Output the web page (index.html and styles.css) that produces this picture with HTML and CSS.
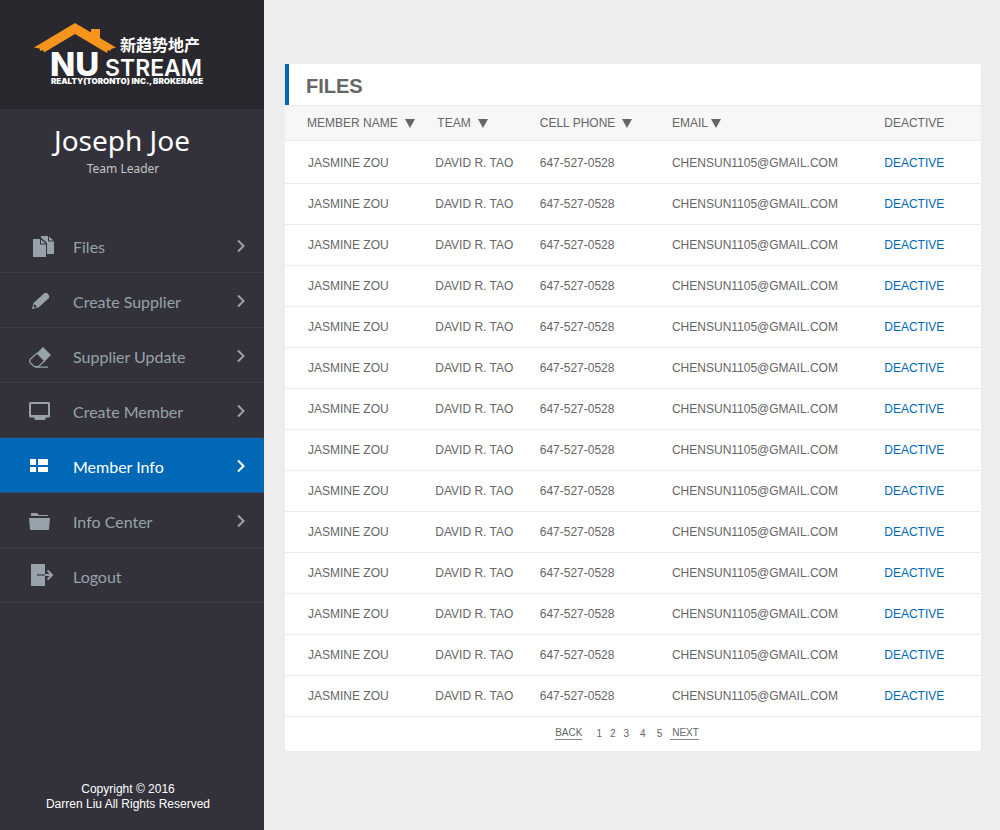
FILE: index.html
```html
<!DOCTYPE html>
<html lang="en">
<head>
<meta charset="utf-8">
<meta name="viewport" content="width=device-width, initial-scale=1">
<title>Member Info</title>
<link rel="stylesheet" href="styles.css">
</head>
<body>
<div class="layout">
  <aside class="sidebar">
    <header class="brand">
      <svg class="logo" width="170" height="66" viewBox="0 0 170 66" role="img" aria-label="NU Stream Realty">
        <path class="roof" d="M0 25.500 L41 1 L57 10.500 V7 H66 V16 L82 25.500 L77 27 L76.500 29 L74 28 L73 31 L41 12 L10 30.500 L9 28 L6.500 29 L5.500 26.500 Z"/>
        <text class="logo-cn" x="86" y="29">新趋势地产</text>
        <text class="logo-nu" x="16" y="54">NU</text>
        <text class="logo-stream" x="71" y="54">STREAM</text>
        <text class="logo-sub" x="17" y="62">REALTY(TORONTO) INC., BROKERAGE</text>
      </svg>
    </header>
    <section class="profile">
      <h2 class="profile-name">Joseph Joe</h2>
      <p class="profile-role">Team Leader</p>
    </section>
    <nav class="menu">
      <a class="menu-item" href="#">
        <svg class="icon" width="26" height="26" viewBox="0 0 26 26"><path d="M4 6h7v5.500h6V24H4z M12 6.500V10.500h4.500z M12 3h7v5.500h6V21h-7V10L12 4.500z M20 3.500V7.500h4.500z"/></svg>
        <span class="menu-label">Files</span>
        <svg class="chevron" width="10" height="14" viewBox="0 0 10 14"><path d="M2 1.500L7.500 7L2 12.500"/></svg>
      </a>
      <a class="menu-item" href="#">
        <svg class="icon" width="26" height="26" viewBox="0 0 26 26"><path d="M3 21l1.500-6L15 5.500Q17 4 19 6t1 4L9.500 19.500z M4.500 18.500l1.200 1.200L8 19 5.500 16z" fill-rule="evenodd"/></svg>
        <span class="menu-label">Create Supplier</span>
        <svg class="chevron" width="10" height="14" viewBox="0 0 10 14"><path d="M2 1.500L7.500 7L2 12.500"/></svg>
      </a>
      <a class="menu-item" href="#">
        <svg class="icon" width="26" height="26" viewBox="0 0 26 26"><path d="M14 4L22 12L15.500 18.500L7.500 10.500z"/><path class="line" d="M8 10L1.500 16Q-.2 18 1.500 20L5 23.500H9.500L16 17.500M6 24.200H19"/></svg>
        <span class="menu-label">Supplier Update</span>
        <svg class="chevron" width="10" height="14" viewBox="0 0 10 14"><path d="M2 1.500L7.500 7L2 12.500"/></svg>
      </a>
      <a class="menu-item" href="#">
        <svg class="icon" width="26" height="26" viewBox="0 0 26 26"><path fill-rule="evenodd" d="M1.500 4h18Q21 4 21 5.500v12.500Q21 19.500 19.500 19.500H17l-1 2.500H6l-1-2.500H1.500Q0 19.500 0 18V5.500Q0 4 1.500 4z M2 6v11h17V6z"/></svg>
        <span class="menu-label">Create Member</span>
        <svg class="chevron" width="10" height="14" viewBox="0 0 10 14"><path d="M2 1.500L7.500 7L2 12.500"/></svg>
      </a>
      <a class="menu-item active" href="#" aria-current="page">
        <svg class="icon" width="26" height="26" viewBox="0 0 26 26"><path d="M1 6h6v6H1z M9 6h10v6H9z M1 14h6v5H1z M9 14h10v5H9z"/></svg>
        <span class="menu-label">Member Info</span>
        <svg class="chevron" width="10" height="14" viewBox="0 0 10 14"><path d="M2 1.500L7.500 7L2 12.500"/></svg>
      </a>
      <a class="menu-item" href="#">
        <svg class="icon" width="26" height="26" viewBox="0 0 26 26"><path d="M2 8V6q0-1 1-1h5l2 2h9v1H2z M0 10h21l-1 11q0 1-1 1H2q-1 0-1-1z"/></svg>
        <span class="menu-label">Info Center</span>
        <svg class="chevron" width="10" height="14" viewBox="0 0 10 14"><path d="M2 1.500L7.500 7L2 12.500"/></svg>
      </a>
      <a class="menu-item" href="#">
        <svg class="icon" width="26" height="26" viewBox="0 0 26 26"><path d="M2 1h14v22H2z"/><path class="dark-line" d="M8 12h8"/><path class="arrow" d="M16 12h7M18.500 7.500L23 12L18.500 16.500"/></svg>
        <span class="menu-label">Logout</span>
      </a>
    </nav>
    <footer class="copyright">Copyright © 2016<br>Darren Liu All Rights Reserved</footer>
  </aside>
  <main class="content">
    <section class="panel">
      <h1 class="panel-title">FILES</h1>
      <table class="members">
        <colgroup><col class="col-name"><col class="col-team"><col class="col-phone"><col class="col-email"><col class="col-action"></colgroup>
        <thead>
          <tr>
            <th><button class="sort">MEMBER NAME<span class="tri"></span></button></th>
            <th><button class="sort">TEAM<span class="tri"></span></button></th>
            <th><button class="sort">CELL PHONE<span class="tri"></span></button></th>
            <th><button class="sort sort-tight">EMAIL<span class="tri"></span></button></th>
            <th>DEACTIVE</th>
          </tr>
        </thead>
        <tbody>
          <tr><td>JASMINE ZOU</td><td>DAVID R. TAO</td><td>647-527-0528</td><td>CHENSUN1105@GMAIL.COM</td><td><a href="#">DEACTIVE</a></td></tr>
          <tr><td>JASMINE ZOU</td><td>DAVID R. TAO</td><td>647-527-0528</td><td>CHENSUN1105@GMAIL.COM</td><td><a href="#">DEACTIVE</a></td></tr>
          <tr><td>JASMINE ZOU</td><td>DAVID R. TAO</td><td>647-527-0528</td><td>CHENSUN1105@GMAIL.COM</td><td><a href="#">DEACTIVE</a></td></tr>
          <tr><td>JASMINE ZOU</td><td>DAVID R. TAO</td><td>647-527-0528</td><td>CHENSUN1105@GMAIL.COM</td><td><a href="#">DEACTIVE</a></td></tr>
          <tr><td>JASMINE ZOU</td><td>DAVID R. TAO</td><td>647-527-0528</td><td>CHENSUN1105@GMAIL.COM</td><td><a href="#">DEACTIVE</a></td></tr>
          <tr><td>JASMINE ZOU</td><td>DAVID R. TAO</td><td>647-527-0528</td><td>CHENSUN1105@GMAIL.COM</td><td><a href="#">DEACTIVE</a></td></tr>
          <tr><td>JASMINE ZOU</td><td>DAVID R. TAO</td><td>647-527-0528</td><td>CHENSUN1105@GMAIL.COM</td><td><a href="#">DEACTIVE</a></td></tr>
          <tr><td>JASMINE ZOU</td><td>DAVID R. TAO</td><td>647-527-0528</td><td>CHENSUN1105@GMAIL.COM</td><td><a href="#">DEACTIVE</a></td></tr>
          <tr><td>JASMINE ZOU</td><td>DAVID R. TAO</td><td>647-527-0528</td><td>CHENSUN1105@GMAIL.COM</td><td><a href="#">DEACTIVE</a></td></tr>
          <tr><td>JASMINE ZOU</td><td>DAVID R. TAO</td><td>647-527-0528</td><td>CHENSUN1105@GMAIL.COM</td><td><a href="#">DEACTIVE</a></td></tr>
          <tr><td>JASMINE ZOU</td><td>DAVID R. TAO</td><td>647-527-0528</td><td>CHENSUN1105@GMAIL.COM</td><td><a href="#">DEACTIVE</a></td></tr>
          <tr><td>JASMINE ZOU</td><td>DAVID R. TAO</td><td>647-527-0528</td><td>CHENSUN1105@GMAIL.COM</td><td><a href="#">DEACTIVE</a></td></tr>
          <tr><td>JASMINE ZOU</td><td>DAVID R. TAO</td><td>647-527-0528</td><td>CHENSUN1105@GMAIL.COM</td><td><a href="#">DEACTIVE</a></td></tr>
          <tr><td>JASMINE ZOU</td><td>DAVID R. TAO</td><td>647-527-0528</td><td>CHENSUN1105@GMAIL.COM</td><td><a href="#">DEACTIVE</a></td></tr>
        </tbody>
      </table>
      <nav class="pager" aria-label="Pages">
        <a class="step back" href="#">BACK</a>
        <a href="#">1</a>
        <a href="#">2</a>
        <a href="#">3</a>
        <a class="far" href="#">4</a>
        <a class="far" href="#">5</a>
        <a class="step next" href="#">NEXT</a>
      </nav>
    </section>
  </main>
</div>
</body>
</html>
```

FILE: styles.css
```css
* { box-sizing: border-box; }

body {
  margin: 0;
  background: #ededed;
  color: #666;
  font-family: "Liberation Sans", Arial, sans-serif;
  font-size: 12px;
}

a { color: inherit; text-decoration: none; }

.layout { display: flex; min-height: 100vh; }

.sidebar {
  flex: 0 0 264px;
  display: flex;
  flex-direction: column;
  background: #33323a;
}

.brand {
  padding: 22px 34px 21px;
  background: #29282e;
}

.logo { display: block; overflow: visible; }
.logo text { fill: #fff; }
.roof { fill: #f6951e; }
.logo-cn { font: 700 16px "Noto Sans CJK SC", sans-serif; }
.logo-nu { font: 800 33px Inter, sans-serif; }
.logo-stream { font: 600 23px Inter, sans-serif; }
.logo-sub { font: 900 8px Inter, sans-serif; }

.profile {
  padding: 12px 20px 39px;
  font-family: "Noto Sans", sans-serif;
  text-align: center;
}

.profile-name {
  margin: 0;
  color: #fff;
  font-size: 28px;
  font-weight: 400;
  line-height: 38px;
  padding-right: 20px;
}

.profile-role {
  margin: 0;
  padding-right: 18px;
  color: #c4c4c6;
  font-size: 12px;
  line-height: 20px;
}

.menu-item {
  display: flex;
  align-items: center;
  gap: 18px;
  min-height: 55px;
  padding: 2px 18px 0 29px;
  border-bottom: 1px solid #3c3b44;
  color: #97a2ab;
  font-family: Lato, sans-serif;
  font-size: 16px;
}

.menu-item.active { background: #0068b7; color: #fff; border-color: #2a5078; }
.menu-label { flex: 1; }
.icon, .chevron { flex: none; fill: currentColor; }
.chevron { fill: none; stroke: currentColor; stroke-width: 2; }
.line, .arrow { fill: none; stroke: currentColor; stroke-width: 1.2; }
.arrow { stroke-width: 2; }
.dark-line { stroke: #5d636b; stroke-width: 2; }

.copyright {
  margin-top: auto;
  padding: 0 8px 18px 0;
  color: #fff;
  line-height: 15px;
  text-align: center;
}

.content { flex: 1; min-width: 0; padding: 64px 19px 20px 21px; }

.panel {
  background: #fff;
  border-radius: 0 3px 3px 3px;
}

.panel-title {
  margin: 0;
  padding: 3px 17px 0;
  border-left: 4px solid #0068b7;
  font-size: 20px;
  line-height: 38px;
}

.members {
  width: 100%;
  table-layout: fixed;
  border-collapse: separate;
  border-spacing: 0;
}

.col-name { width: 21.6%; }
.col-team { width: 15%; }
.col-phone { width: 19%; }
.col-email { width: 30.5%; }

.members th, .members td {
  height: 41px;
  padding: 0;
  border-bottom: 1px solid #ececec;
  font-weight: 400;
  text-align: left;
  white-space: nowrap;
}

.members th {
  height: 36px;
  background: #f7f7f7;
  border-top: 1px solid #ececec;
}

.members th:first-child { padding-left: 22px; }
.members th:nth-child(2) { padding-left: 2px; }
.members td:first-child { padding-left: 23px; }
.members tbody tr:first-child td { height: 43px; padding-top: 2px; }
.members td a { color: #0068b7; }

.sort {
  display: inline-flex;
  align-items: center;
  gap: 7px;
  padding: 0;
  border: 0;
  background: none;
  color: inherit;
  font: inherit;
  cursor: pointer;
}

.sort-tight { gap: 3px; }

.tri {
  border: 5px solid transparent;
  border-top: 9px solid #666;
  border-bottom: 0;
}

.pager {
  display: flex;
  justify-content: center;
  align-items: center;
  gap: 8px;
  padding: 9px 12px 11px 0;
  font-size: 10px;
  line-height: 13px;
}

.step { border-bottom: 1px solid #888; }
.back { margin-right: 6px; }
.next { padding-left: 2px; }
.far { margin-left: 3px; }
```
